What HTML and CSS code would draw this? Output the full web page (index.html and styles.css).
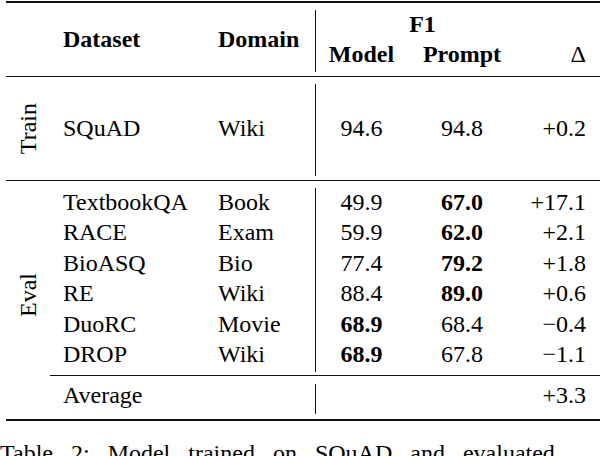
FILE: index.html
```html
<!DOCTYPE html>
<html lang="en">
<head>
<meta charset="utf-8">
<title>Table 2</title>
<link rel="stylesheet" href="styles.css">
</head>
<body>
<div class="tbl">
  <div class="rule thick"></div>

  <div class="sec">
    <div class="lab"></div>
    <div class="grid g-head">
      <div class="ds b h-ds">Dataset</div>
      <div class="dm b h-dm">Domain</div>
      <div class="vl h-vl"></div>
      <div class="b h-f1">F1</div>
      <div class="num b h-r2">Model</div>
      <div class="num b h-r2">Prompt</div>
      <div class="dl h-r2">&#916;</div>
    </div>
  </div>

  <div class="rule"></div>

  <div class="sec">
    <div class="lab"><span>Train</span></div>
    <div class="grid g-train">
      <div class="ds">SQuAD</div>
      <div class="dm">Wiki</div>
      <div class="vl"></div>
      <div class="num">94.6</div>
      <div class="num">94.8</div>
      <div class="dl">+0.2</div>
    </div>
  </div>

  <div class="rule"></div>

  <div class="sec">
    <div class="lab lab-eval"><span>Eval</span></div>
    <div class="col">
      <div class="grid g-eval">
        <div class="vl"></div>
        <div class="ds">TextbookQA</div><div class="dm">Book</div><div class="num">49.9</div><div class="num b">67.0</div><div class="dl">+17.1</div>
        <div class="ds">RACE</div><div class="dm">Exam</div><div class="num">59.9</div><div class="num b">62.0</div><div class="dl">+2.1</div>
        <div class="ds">BioASQ</div><div class="dm">Bio</div><div class="num">77.4</div><div class="num b">79.2</div><div class="dl">+1.8</div>
        <div class="ds">RE</div><div class="dm">Wiki</div><div class="num">88.4</div><div class="num b">89.0</div><div class="dl">+0.6</div>
        <div class="ds">DuoRC</div><div class="dm">Movie</div><div class="num b">68.9</div><div class="num">68.4</div><div class="dl">&#8722;0.4</div>
        <div class="ds">DROP</div><div class="dm">Wiki</div><div class="num b">68.9</div><div class="num">67.8</div><div class="dl">&#8722;1.1</div>
      </div>
      <div class="cline"></div>
      <div class="grid g-avg">
        <div class="ds">Average</div>
        <div class="dm"></div>
        <div class="vl"></div>
        <div class="num"></div>
        <div class="num"></div>
        <div class="dl">+3.3</div>
      </div>
    </div>
  </div>

  <div class="rule thick"></div>
</div>
<p class="cap">Table 2: Model trained on SQuAD and evaluated</p>
</body>
</html>
```

FILE: styles.css
```css
html {
  overflow: hidden;
}

body {
  margin: 0;
  background: #fff;
  color: #000;
  font-family: "Liberation Serif", "Times New Roman", serif;
  font-size: 24px;
}

.tbl {
  margin: 1px 0 0 6px;
  width: 594px;
}

.rule {
  height: 1px;
  background: #111;
}

.rule.thick {
  height: 2px;
}

.sec {
  display: flex;
}

.lab {
  width: 44px;
  flex: none;
  display: flex;
  align-items: center;
  justify-content: center;
}

.lab span {
  writing-mode: vertical-rl;
  transform: rotate(180deg);
  line-height: 30px;
}

.lab-eval {
  padding-bottom: 10px;
}

.col {
  flex: 1;
  display: flex;
  flex-direction: column;
}

.grid {
  flex: 1;
  display: grid;
  grid-template-columns: 156px 109px 1px 91px 110px 83px;
  line-height: 30.5px;
  white-space: nowrap;
}

.ds {
  padding-left: 13px;
}

.dm {
  padding-left: 12px;
}

.num {
  text-align: center;
}

.dl {
  text-align: right;
  padding-right: 14px;
}

.b {
  font-weight: bold;
}

.vl {
  background: #111;
  margin: 7px 0 4px;
}

/* header */
.g-head {
  grid-template-rows: 36px 37px;
}

.h-ds {
  grid-column: 1;
  grid-row: 1 / 3;
  align-self: center;
}

.h-dm {
  grid-column: 2;
  grid-row: 1 / 3;
  align-self: center;
}

.h-vl {
  grid-column: 3;
  grid-row: 1 / 3;
}

.h-f1 {
  grid-column: 4 / 6;
  grid-row: 1;
  align-self: end;
  text-align: center;
  padding-left: 12px;
}

.h-r2 {
  grid-row: 2;
  align-self: start;
}

/* train */
.g-train {
  grid-template-rows: 103px;
  align-items: center;
}

.g-train .vl {
  align-self: stretch;
}

/* eval */
.g-eval {
  padding: 5.7px 0 5.3px;
  grid-auto-rows: 30.5px;
}

.g-eval .vl {
  grid-column: 3;
  grid-row: 1 / 7;
  margin: 1.3px 0 -2.3px;
}

.cline {
  height: 1px;
  background: #111;
}

.g-avg {
  padding: 3.7px 0 8.8px;
  grid-template-rows: 30.5px;
}

.g-avg .vl {
  margin: 4.3px 0 -3.8px;
}

.cap {
  margin: 17px 0 0;
  line-height: 30px;
  white-space: nowrap;
  word-spacing: 12px;
}
```
